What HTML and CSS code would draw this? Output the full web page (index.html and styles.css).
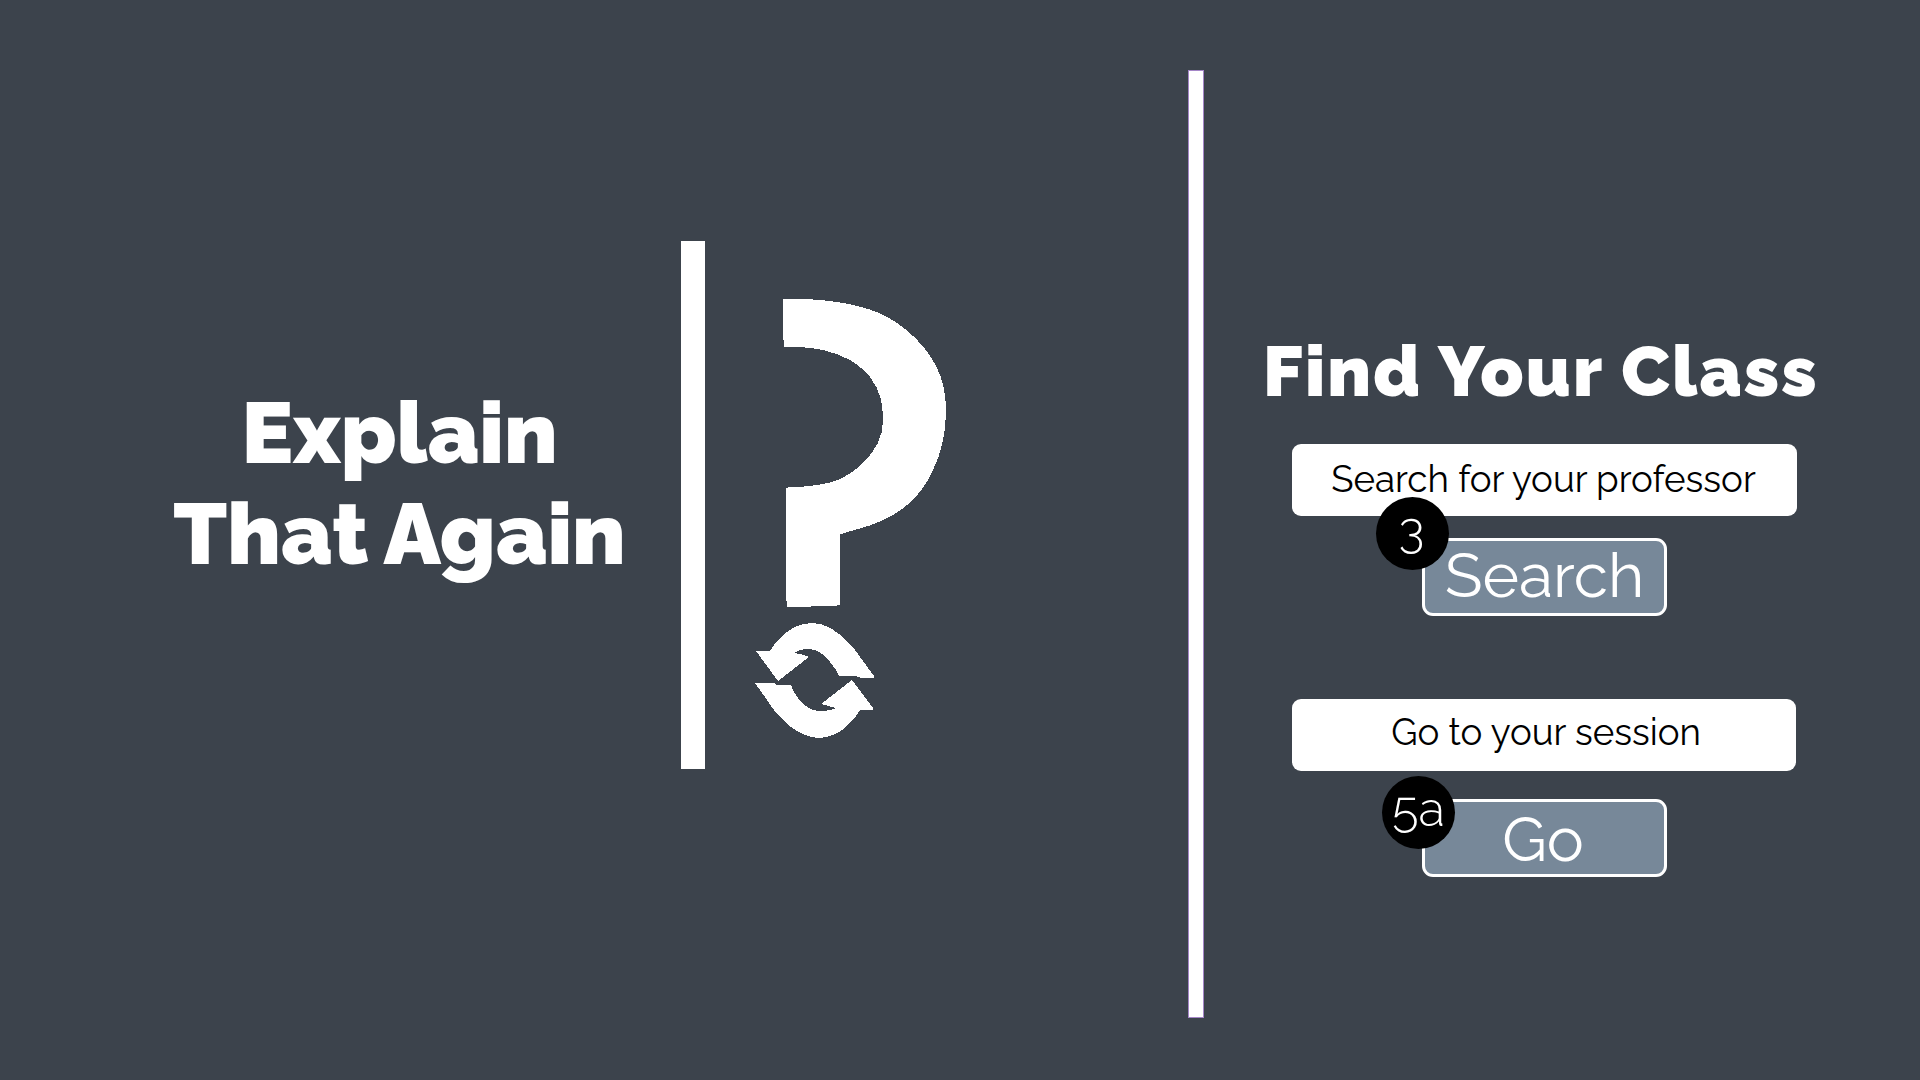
FILE: index.html
```
<!DOCTYPE html>
<html lang="en">
<head>
<meta charset="utf-8">
<title>Explain That Again</title>
<link rel="stylesheet" href="styles.css">
</head>
<body>
<main class="screen">
  <section class="brand">
    <h1 class="brand-title">Explain<br>That Again</h1>
    <div class="brand-bar"></div>
    <svg class="brand-mark" viewBox="750 290 200 460" width="200" height="460" fill="#fff" shape-rendering="crispEdges" aria-hidden="true">
      <path d="M783 299H803C835 300 868 306 887 317C911 330 928 350 936 366C943 379 946 395 946 412C946 432 941 454 933 470C927 484 918 496 907 505C893 517 877 524 858 529L841 534L839.500 535V605L834 606L787 607L786 595L785.500 489L789 487C812 487 828 484 840 479C850 474 857 469 863 463C876 450 883 437 883 420C883 403 880 390 870 377C864 370 858 365 850 360C833 351 815 347 795 347H784Q783 340 783 299Z"/>
      <path d="M756 651H770C775 643 778 640 783 635C791 628 801 623 812.500 623C825 623 837 631 847 641C853 647 857 652 860 657L874 676V678H861L856 676H839C837 671 834 667 830 662C823 653 816 649 809 649Q800 649 794 653L804 655L809 657L778 681Z"/>
      <path d="M755 683H774L776 685H791C792 689 795 694 798 698C805 707 812 711 820 711Q829 711 836 708L821 704L852 680L873 708V710H860C857 716 853 720 848 725C839 734 828 738 818 738C805 737 792 730 780 717C775 712 771 706 767 700Z"/>
    </svg>
  </section>
  <div class="divider"></div>
  <section class="finder">
    <h2 class="finder-title">Find Your Class</h2>
    <div class="step step-search">
      <div class="field">Search for your professor</div>
      <button class="action">Search</button>
      <div class="badge">3</div>
    </div>
    <div class="step step-go">
      <div class="field">Go to your session</div>
      <button class="action">Go</button>
      <div class="badge">5a</div>
    </div>
  </section>
</main>
</body>
</html>
```
FILE: styles.css
```
* { box-sizing: border-box; }
body {
  margin: 0;
  background: #3c434c;
  color: #fff;
  font-family: Raleway, Lato, "Open Sans", sans-serif;
}
.screen {
  display: flex;
  align-items: flex-start;
  width: 1920px;
  height: 1080px;
  overflow: hidden;
}
.brand {
  display: flex;
  align-items: flex-start;
  width: 1188px;
  padding-left: 116px;
}
.brand-title {
  width: 565px;
  margin: 382px 0 0;
  padding-left: 2px;
  font-size: 86.4px;
  line-height: 101px;
  font-weight: 900;
  word-spacing: -2px;
  text-align: center;
  white-space: nowrap;
}
.brand-bar {
  width: 24px;
  height: 528px;
  margin-top: 241px;
  background: #fff;
}
.brand-mark {
  display: block;
  margin: 290px 0 0 45px;
}
.divider {
  width: 16px;
  height: 948px;
  margin-top: 70px;
  border: 1px solid #a586c8;
  background: #fff;
}
.finder {
  width: 716px;
  padding: 331px 0 0 88px;
}
.finder-title {
  width: 548px;
  margin: 0 0 0 -29px;
  font-size: 70.5px;
  line-height: 80px;
  font-weight: 900;
  letter-spacing: 2.2px;
  text-align: left;
  white-space: nowrap;
}
.step {
  position: relative;
  display: flex;
  flex-direction: column;
  width: 505px;
}
.step-search { margin-top: 33px; }
.step-go { margin-top: 83px; }
.field {
  display: flex;
  justify-content: center;
  height: 72px;
  padding-right: 2px;
  border-radius: 9px;
  background: #fff;
  color: #000;
  font-size: 36.7px;
  line-height: 72px;
  white-space: nowrap;
}
.action {
  display: flex;
  justify-content: center;
  width: 245px;
  height: 78px;
  margin: 22px 0 0 130px;
  padding: 0;
  border: 3px solid #fff;
  border-radius: 11px;
  background: #778899;
  color: #fff;
  font: 400 62.3px/68px Raleway, Lato, "Open Sans", sans-serif;
}
.step-go .field { width: 504px; padding: 0 0 0 4px; line-height: 68px; }
.step-go .action { margin-top: 28px; padding-right: 3px; line-height: 75px; }
.badge {
  position: absolute;
  left: 84px;
  top: 53px;
  display: flex;
  justify-content: center;
  width: 73px;
  height: 73px;
  padding-right: 2px;
  border-radius: 50%;
  background: #000;
  font-size: 49px;
  font-weight: 300;
  line-height: 65px;
}
.step-go .badge { left: 90px; top: 77px; padding-right: 0; }
```
